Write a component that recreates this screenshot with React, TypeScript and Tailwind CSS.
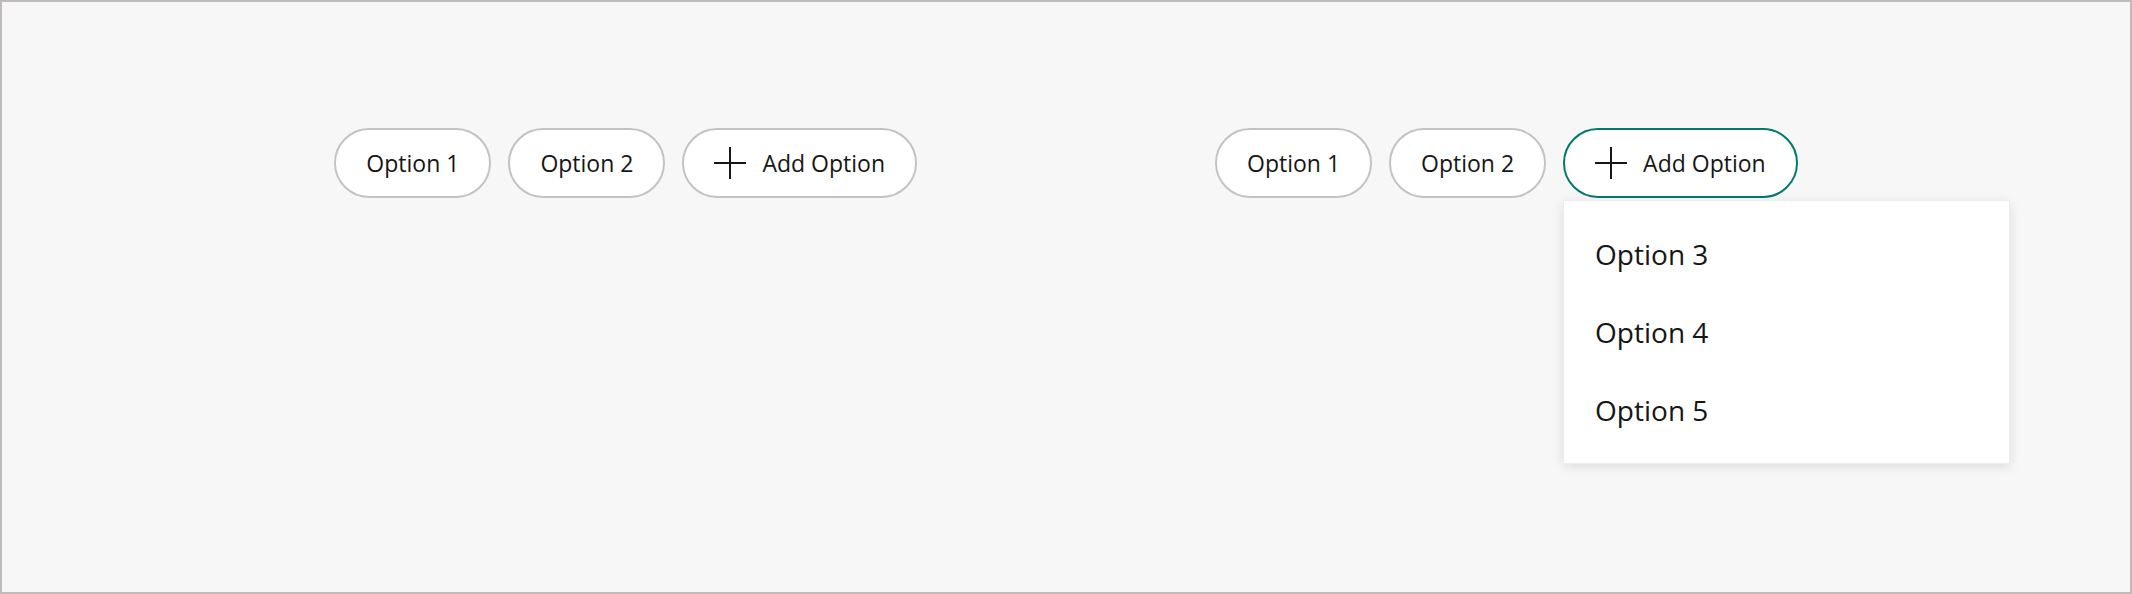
const font = { fontFamily: '"Open Sans", "Noto Sans", sans-serif' };

interface ChipProps {
  label: string;
}

const Chip = ({ label }: ChipProps) => (
  <button className="h-[70px] rounded-full border-2 border-[#c3c3c3] bg-white px-[30px] text-[23px] text-[#161616]">
    {label}
  </button>
);

const AddButton = ({ open }: { open?: boolean }) => (
  <div className="relative">
    <button
      className={`flex h-[70px] items-center gap-[16px] rounded-full border-2 bg-white px-[30px] text-[23px] text-[#161616] ${
        open ? 'border-[#007a6e]' : 'border-[#c3c3c3]'
      }`}
    >
      <svg width="32" height="32" viewBox="0 0 32 32" className="shrink-0">
        <path d="M16 0v32M0 16h32" stroke="#161616" strokeWidth="2" fill="none" />
      </svg>
      Add Option
    </button>

    {open && (
      <ul className="absolute left-[1px] top-full z-10 mt-[3px] w-[445px] bg-white py-[14px] shadow-[0_3px_12px_rgba(0,0,0,0.13)] outline outline-1 outline-[#ededed]">
        {['Option 3', 'Option 4', 'Option 5'].map((opt) => (
          <li key={opt} className="flex h-[78px] items-center pl-[31px] text-[28px] text-[#161616]">
            {opt}
          </li>
        ))}
      </ul>
    )}
  </div>
);

const ChipGroup = ({ open }: { open?: boolean }) => (
  <div className="flex items-center gap-[17px]">
    <Chip label="Option 1" />
    <Chip label="Option 2" />
    <AddButton open={open} />
  </div>
);

export default function App() {
  return (
    <div
      className="box-border h-[594px] w-full border-2 border-[#bfbbbb] bg-[#f7f7f7]"
      style={font}
    >
      <div className="flex justify-center gap-[298px] pt-[126px]">
        <ChipGroup />
        <ChipGroup open />
      </div>
    </div>
  );
}
